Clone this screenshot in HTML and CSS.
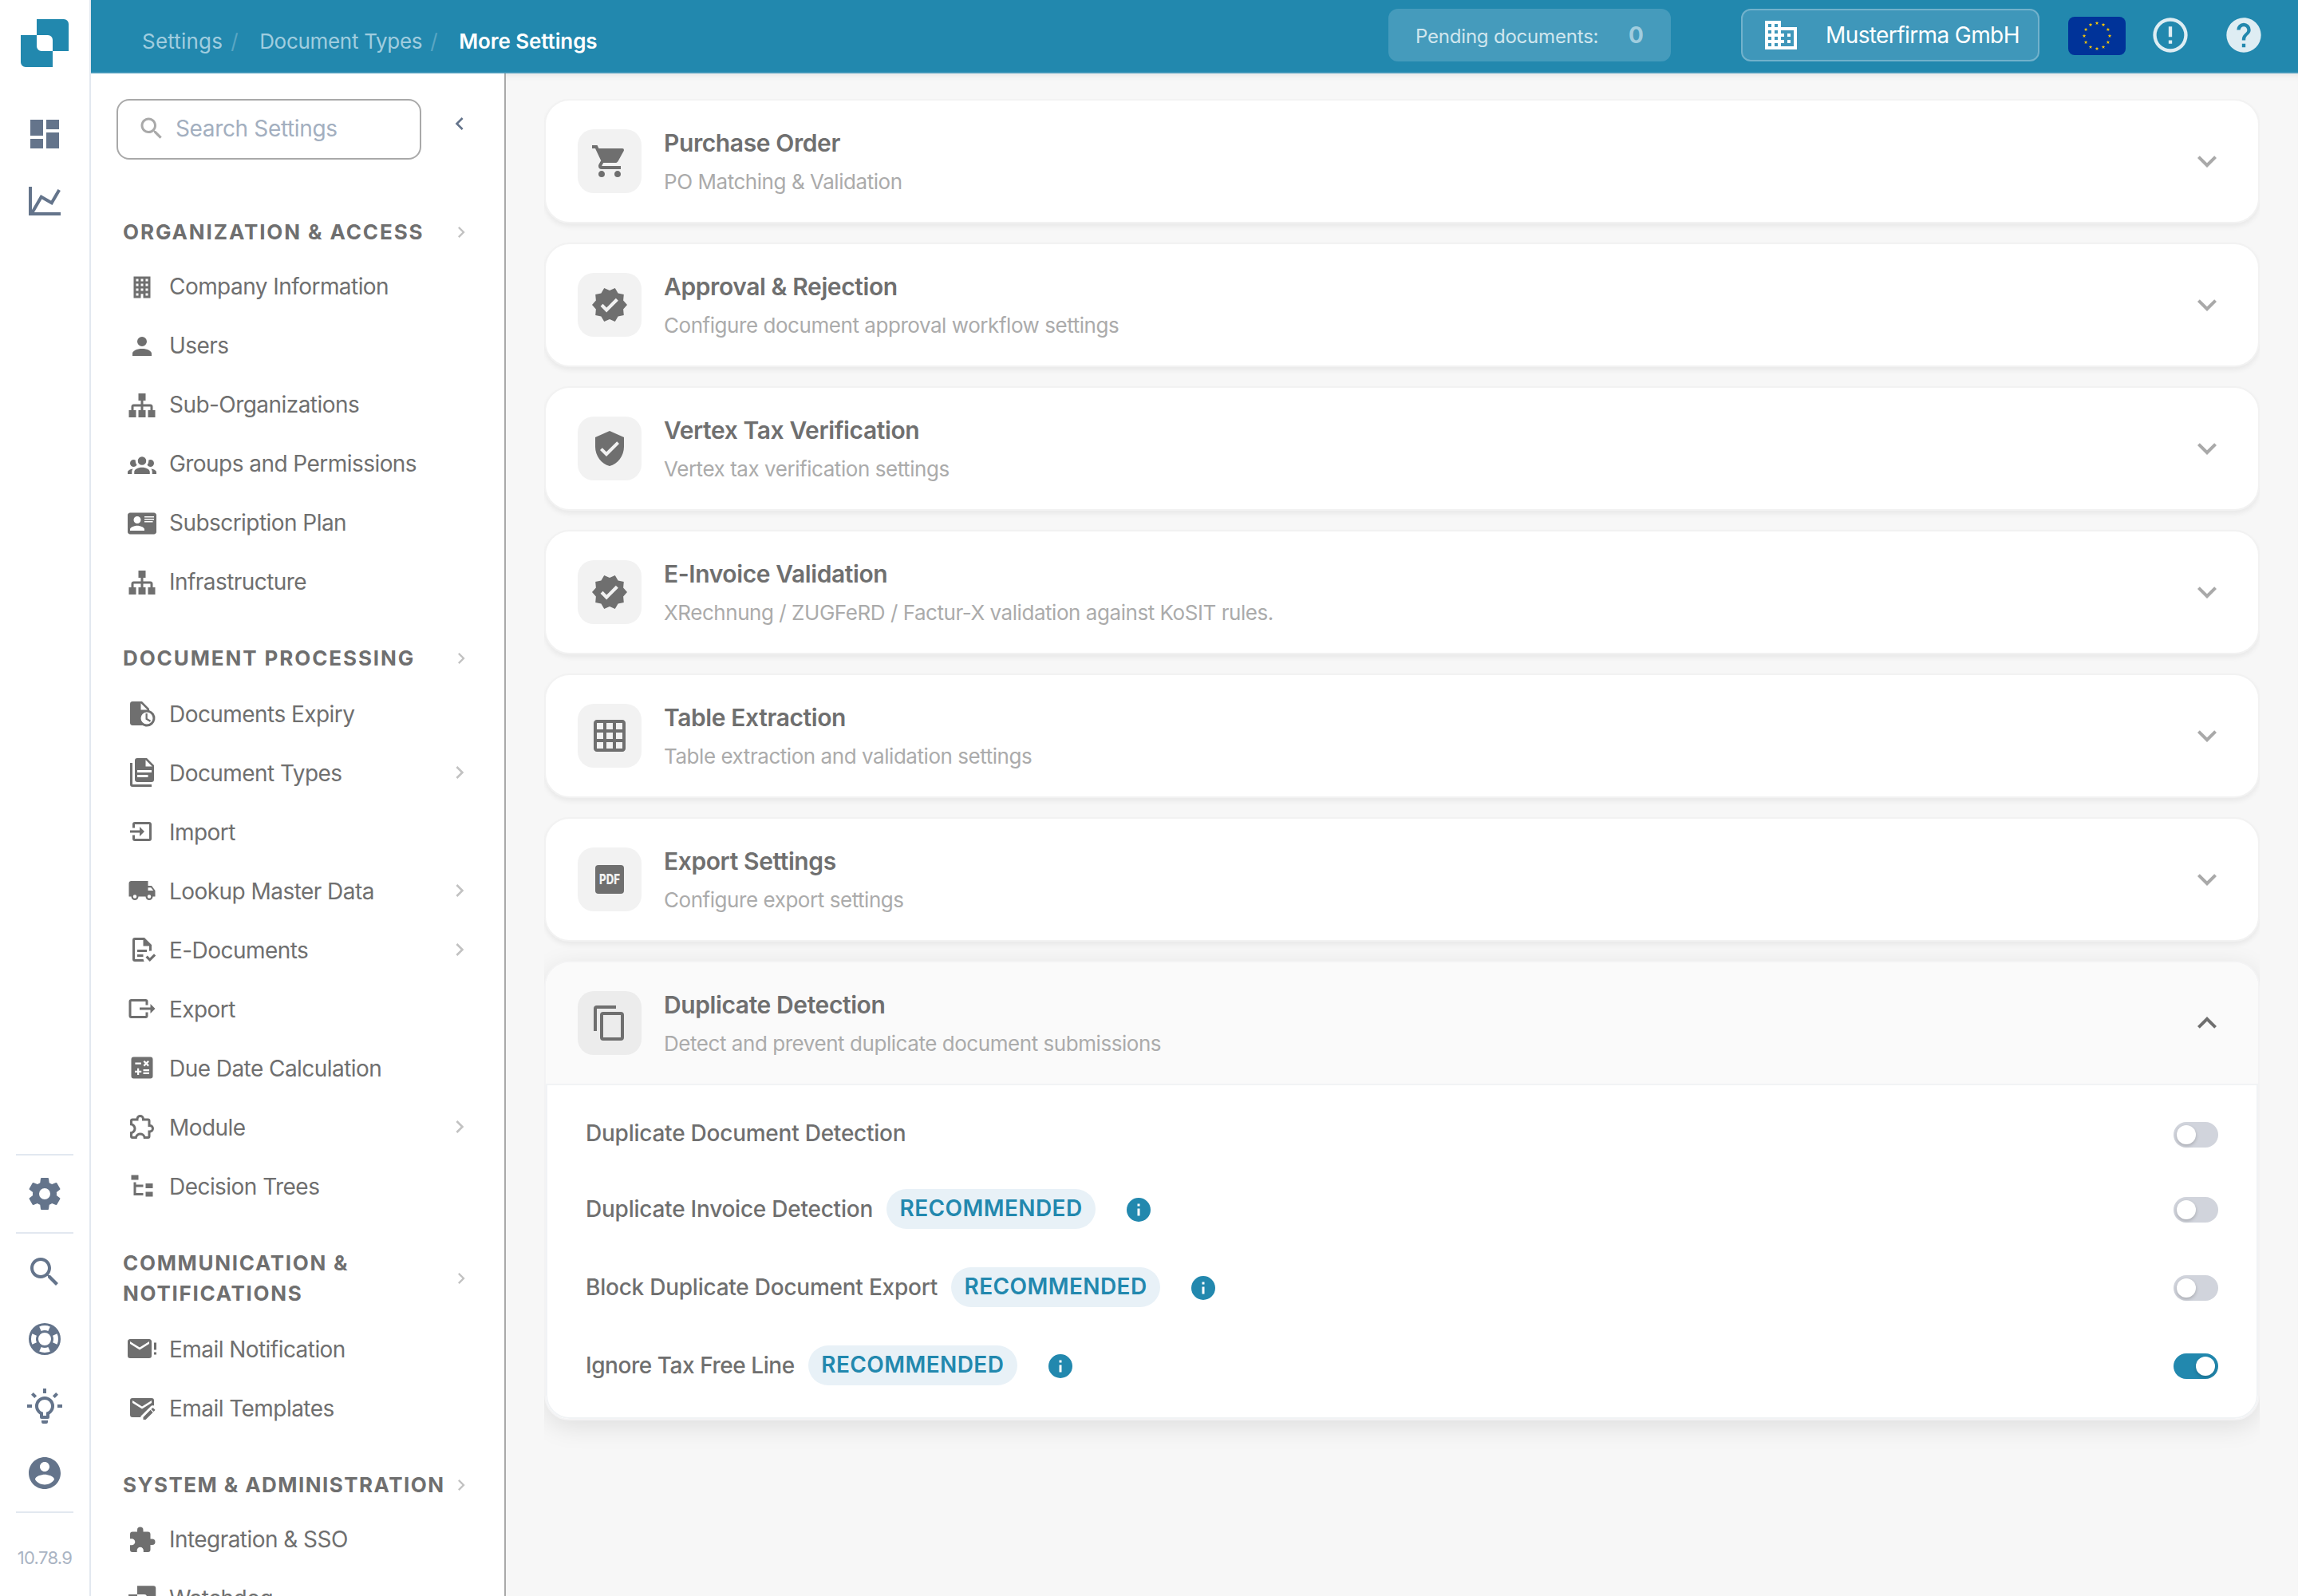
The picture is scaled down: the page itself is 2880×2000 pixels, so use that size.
FILE: index.html
```html
<!DOCTYPE html>
<html lang="en">
<head>
    <meta charset="UTF-8">
    <title>More Settings</title>
    <link rel="stylesheet" href="styles.css">
</head>
<body>
    <!-- Icon sprite -->
    <svg class="sprite" xmlns="http://www.w3.org/2000/svg">
        <symbol id="dashboard" viewBox="0 0 24 24"><path d="M3 13h8V3H3zm0 8h8v-6H3zm10 0h8V11h-8zm0-18v6h8V3z"/></symbol>
        <symbol id="chart" viewBox="0 0 24 24"><path d="M16,11.78L20.24,4.45L21.97,5.45L16.74,14.5L10.23,10.75L5.46,19H22V21H2V3H4V17.54L9.5,8L16,11.78Z"/></symbol>
        <symbol id="cog" viewBox="0 0 24 24"><path d="M12,15.5A3.5,3.5 0 0,1 8.5,12A3.5,3.5 0 0,1 12,8.5A3.5,3.5 0 0,1 15.5,12A3.5,3.5 0 0,1 12,15.5M19.43,12.97C19.47,12.65 19.5,12.33 19.5,12C19.5,11.67 19.47,11.34 19.43,11L21.54,9.37C21.73,9.22 21.78,8.95 21.66,8.73L19.66,5.27C19.54,5.05 19.27,4.96 19.05,5.05L16.56,6.05C16.04,5.66 15.5,5.32 14.87,5.07L14.5,2.42C14.46,2.18 14.25,2 14,2H10C9.75,2 9.54,2.18 9.5,2.42L9.13,5.07C8.5,5.32 7.96,5.66 7.44,6.05L4.95,5.05C4.73,4.96 4.46,5.05 4.34,5.27L2.34,8.73C2.21,8.95 2.27,9.22 2.46,9.37L4.57,11C4.53,11.34 4.5,11.67 4.5,12C4.5,12.33 4.53,12.65 4.57,12.97L2.46,14.63C2.27,14.78 2.21,15.05 2.34,15.27L4.34,18.73C4.46,18.95 4.73,19.03 4.95,18.95L7.44,17.94C7.96,18.34 8.5,18.68 9.13,18.93L9.5,21.58C9.54,21.82 9.75,22 10,22H14C14.25,22 14.46,21.82 14.5,21.58L14.87,18.93C15.5,18.67 16.04,18.34 16.56,17.94L19.05,18.95C19.27,19.03 19.54,18.95 19.66,18.73L21.66,15.27C21.78,15.05 21.73,14.78 21.54,14.63L19.43,12.97Z"/></symbol>
        <symbol id="search" viewBox="0 0 24 24"><path d="M15.5 14h-.79l-.28-.27C15.41 12.59 16 11.11 16 9.5 16 5.91 13.09 3 9.5 3S3 5.91 3 9.5 5.91 16 9.5 16c1.61 0 3.09-.59 4.23-1.57l.27.28v.79l5 4.99L20.49 19zm-6 0C7.01 14 5 11.99 5 9.5S7.01 5 9.5 5 14 7.01 14 9.5 11.99 14 9.5 14"/></symbol>
        <symbol id="lifebuoy" viewBox="0 0 24 24"><path d="M19.79,15.41C20.74,13.24 20.74,10.75 19.79,8.59L17.05,9.83C17.65,11.21 17.65,12.78 17.06,14.17L19.79,15.41M15.42,4.21C13.25,3.26 10.76,3.26 8.59,4.21L9.83,6.94C11.22,6.35 12.79,6.35 14.18,6.95L15.42,4.21M4.21,8.58C3.26,10.76 3.26,13.24 4.21,15.42L6.95,14.17C6.35,12.79 6.35,11.21 6.95,9.82L4.21,8.58M8.59,19.79C10.76,20.74 13.25,20.74 15.42,19.78L14.18,17.05C12.8,17.65 11.22,17.65 9.84,17.06L8.59,19.79M12,2A10,10 0 0,1 22,12A10,10 0 0,1 12,22A10,10 0 0,1 2,12A10,10 0 0,1 12,2M12,8A4,4 0 0,0 8,12A4,4 0 0,0 12,16A4,4 0 0,0 16,12A4,4 0 0,0 12,8Z"/></symbol>
        <symbol id="bulb" viewBox="0 0 24 24"><path d="M20,11H23V13H20V11M1,11H4V13H1V11M13,1V4H11V1H13M4.92,3.5L7.05,5.64L5.63,7.05L3.5,4.93L4.92,3.5M16.95,5.63L19.07,3.5L20.5,4.93L18.37,7.05L16.95,5.63M12,6A6,6 0 0,1 18,12C18,14.22 16.79,16.16 15,17.2V19A1,1 0 0,1 14,20H10A1,1 0 0,1 9,19V17.2C7.21,16.16 6,14.22 6,12A6,6 0 0,1 12,6M14,21V22A1,1 0 0,1 13,23H11A1,1 0 0,1 10,22V21H14M11,18H13V15.87C14.73,15.43 16,13.86 16,12A4,4 0 0,0 12,8A4,4 0 0,0 8,12C8,13.86 9.27,15.43 11,15.87V18Z"/></symbol>
        <symbol id="account-circle" viewBox="0 0 24 24"><path d="M12 2C6.48 2 2 6.48 2 12s4.48 10 10 10 10-4.48 10-10S17.52 2 12 2zm0 3c1.66 0 3 1.34 3 3s-1.34 3-3 3-3-1.34-3-3 1.34-3 3-3zm0 14.2c-2.5 0-4.71-1.28-6-3.22.03-1.99 4-3.08 6-3.08 1.99 0 5.97 1.09 6 3.08-1.29 1.94-3.5 3.22-6 3.22z"/></symbol>
        <symbol id="domain" viewBox="0 0 24 24"><path d="M18,15H16V17H18M18,11H16V13H18M20,19H12V17H14V15H12V13H14V11H12V9H20M10,7H8V5H10M10,11H8V9H10M10,15H8V13H10M10,19H8V17H10M6,7H4V5H6M6,11H4V9H6M6,15H4V13H6M6,19H4V17H6M12,7V3H2V21H22V7H12Z"/></symbol>
        <symbol id="alert" viewBox="0 0 24 24"><path d="M11,15H13V17H11V15M11,7H13V13H11V7M12,2A10,10 0 0,0 2,12A10,10 0 0,0 12,22A10,10 0 0,0 22,12A10,10 0 0,0 12,2M12,20A8,8 0 0,1 4,12A8,8 0 0,1 12,4A8,8 0 0,1 20,12A8,8 0 0,1 12,20Z"/></symbol>
        <symbol id="help" viewBox="0 0 24 24"><path d="M15.07,11.25L14.17,12.17C13.45,12.89 13,13.5 13,15H11V14.5C11,13.39 11.45,12.39 12.17,11.67L13.41,10.41C13.78,10.05 14,9.55 14,9C14,7.89 13.1,7 12,7A2,2 0 0,0 10,9H8A4,4 0 0,1 12,5A4,4 0 0,1 16,9C16,9.88 15.64,10.67 15.07,11.25M13,19H11V17H13M12,2A10,10 0 0,0 2,12A10,10 0 0,0 12,22A10,10 0 0,0 22,12C22,6.47 17.5,2 12,2Z"/></symbol>
        <symbol id="office" viewBox="0 0 24 24"><path d="M5,3V21H11V17.5H13V21H19V3H5M7,5H9V7H7V5M11,5H13V7H11V5M15,5H17V7H15V5M7,9H9V11H7V9M11,9H13V11H11V9M15,9H17V11H15V9M7,13H9V15H7V13M11,13H13V15H11V13M15,13H17V15H15V13M7,17H9V19H7V17M15,17H17V19H15V17Z"/></symbol>
        <symbol id="account" viewBox="0 0 24 24"><path d="M12,4A4,4 0 0,1 16,8A4,4 0 0,1 12,12A4,4 0 0,1 8,8A4,4 0 0,1 12,4M12,14C16.42,14 20,15.79 20,18V20H4V18C4,15.79 7.58,14 12,14Z"/></symbol>
        <symbol id="sitemap" viewBox="0 0 24 24"><path d="M9,2V8H11V11H5C3.89,11 3,11.89 3,13V16H1V22H7V16H5V13H11V16H9V22H15V16H13V13H19V16H17V22H23V16H21V13C21,11.89 20.11,11 19,11H13V8H15V2H9Z"/></symbol>
        <symbol id="group" viewBox="0 0 24 24"><path d="M12,5.5A3.5,3.5 0 0,1 15.5,9A3.5,3.5 0 0,1 12,12.5A3.5,3.5 0 0,1 8.5,9A3.5,3.5 0 0,1 12,5.5M5,8C5.56,8 6.08,8.15 6.53,8.42C6.38,9.85 6.8,11.27 7.66,12.38C7.16,13.34 6.16,14 5,14A3,3 0 0,1 2,11A3,3 0 0,1 5,8M19,8A3,3 0 0,1 22,11A3,3 0 0,1 19,14C17.84,14 16.84,13.34 16.34,12.38C17.2,11.27 17.62,9.85 17.47,8.42C17.92,8.15 18.44,8 19,8M5.5,18.25C5.5,16.18 8.41,14.5 12,14.5C15.59,14.5 18.5,16.18 18.5,18.25V20H5.5V18.25M0,20V18.5C0,17.11 1.89,15.94 4.45,15.6C3.86,16.28 3.5,17.22 3.5,18.25V20H0M24,20H20.5V18.25C20.5,17.22 20.14,16.28 19.55,15.6C22.11,15.94 24,17.11 24,18.5V20Z"/></symbol>
        <symbol id="card-account" viewBox="0 0 24 24"><path d="M2,3H22C23.05,3 24,3.95 24,5V19C24,20.05 23.05,21 22,21H2C0.95,21 0,20.05 0,19V5C0,3.95 0.95,3 2,3M14,6V7H22V6H14M14,8V9H21.5L22,9V8H14M14,10V11H21V10H14M8,13.91C6,13.91 2,15 2,17V18H14V17C14,15 10,13.91 8,13.91M8,6A3,3 0 0,0 5,9A3,3 0 0,0 8,12A3,3 0 0,0 11,9A3,3 0 0,0 8,6Z"/></symbol>
        <symbol id="file-clock" viewBox="0 0 24 24"><path d="M4 2C2.89 2 2 2.89 2 4V20C2 21.11 2.89 22 4 22H12.4C13.5 22.6 14.7 23 16 23A7 7 0 0 0 18 9.3V8L12 2H4M11 3.5L16.5 9H11V3.5M16 11A5 5 0 0 1 16 21A5 5 0 0 1 16 11M15 12V17L18.6 19.2L19.4 17.9L16.5 16.2V12H15Z"/></symbol>
        <symbol id="documents" viewBox="0 0 24 24"><path d="M15,7H20.5L15,1.5V7M8,0H16L22,6V18A2,2 0 0,1 20,20H8C6.89,20 6,19.1 6,18V2A2,2 0 0,1 8,0M4,4V22H20V24H4A2,2 0 0,1 2,22V4H4M8,10V12H20V10H8M8,14V16H17V14H8Z"/></symbol>
        <symbol id="import" viewBox="0 0 24 24"><path d="M14,12L10,8V11H2V13H10V16M20,18V6C20,4.89 19.1,4 18,4H6A2,2 0 0,0 4,6V9H6V6H18V18H6V15H4V18A2,2 0 0,0 6,20H18A2,2 0 0,0 20,18Z"/></symbol>
        <symbol id="truck" viewBox="0 0 24 24"><path d="M18,18.5A1.5,1.5 0 0,1 16.5,17A1.5,1.5 0 0,1 18,15.5A1.5,1.5 0 0,1 19.5,17A1.5,1.5 0 0,1 18,18.5M19.5,9.5L21.46,12H17V9.5M6,18.5A1.5,1.5 0 0,1 4.5,17A1.5,1.5 0 0,1 6,15.5A1.5,1.5 0 0,1 7.5,17A1.5,1.5 0 0,1 6,18.5M20,8H17V4H3C1.89,4 1,4.89 1,6V17H3A3,3 0 0,0 6,20A3,3 0 0,0 9,17H15A3,3 0 0,0 18,20A3,3 0 0,0 21,17H23V12L20,8Z"/></symbol>
        <symbol id="file-check" viewBox="0 0 24 24"><path d="M23.5 17L18.5 22L15 18.5L16.5 17L18.5 19L22 15.5L23.5 17M6 2A2 2 0 0 0 4 4V20A2 2 0 0 0 6 22H13.8A6 6 0 0 1 13.1 20H6V4H13V9H18V13.1A6 6 0 0 1 20 13V8L14 2M8 12V14H16V12M8 16V18H13V16Z"/></symbol>
        <symbol id="export" viewBox="0 0 24 24"><path d="M23,12L19,8V11H10V13H19V16M1,18V6C1,4.89 1.9,4 3,4H15A2,2 0 0,1 17,6V9H15V6H3V18H15V15H17V18A2,2 0 0,1 15,20H3A2,2 0 0,1 1,18Z"/></symbol>
        <symbol id="calculator" viewBox="0 0 24 24"><path d="M19,3H5A2,2 0 0,0 3,5V19A2,2 0 0,0 5,21H19A2,2 0 0,0 21,19V5A2,2 0 0,0 19,3M13.03,7.06L14.09,6L15.5,7.41L16.91,6L17.97,7.06L16.56,8.47L17.97,9.88L16.91,10.94L15.5,9.53L14.09,10.94L13.03,9.88L14.44,8.47L13.03,7.06M6.25,7.72H11.25V9.22H6.25V7.72M11.5,16H9.5V18H8V16H6V14.5H8V12.5H9.5V14.5H11.5V16M18,17.25H13V15.75H18V17.25M18,14.75H13V13.25H18V14.75Z"/></symbol>
        <symbol id="puzzle-outline" viewBox="0 0 24 24"><path d="M22,13.5C22,15.26 20.7,16.72 19,16.96V20A2,2 0 0,1 17,22H13.2V21.7A2.7,2.7 0 0,0 10.5,19C9,19 7.8,20.21 7.8,21.7V22H4A2,2 0 0,1 2,20V16.2H2.3C3.79,16.2 5,15 5,13.5C5,12 3.79,10.8 2.3,10.8H2V7A2,2 0 0,1 4,5H7.04C7.28,3.3 8.74,2 10.5,2C12.26,2 13.72,3.3 13.96,5H17A2,2 0 0,1 19,7V10.04C20.7,10.28 22,11.74 22,13.5M17,15H18.5A1.5,1.5 0 0,0 20,13.5A1.5,1.5 0 0,0 18.5,12H17V7H12V5.5A1.5,1.5 0 0,0 10.5,4A1.5,1.5 0 0,0 9,5.5V7H4V9.12C5.76,9.8 7,11.5 7,13.5C7,15.5 5.75,17.2 4,17.88V20H6.12C6.8,18.25 8.5,17 10.5,17C12.5,17 14.2,18.25 14.88,20H17V15Z"/></symbol>
        <symbol id="file-tree" viewBox="0 0 24 24"><path d="M3,3H9V7H3V3M15,10H21V14H15V10M15,17H21V21H15V17M13,13H7V18H13V20H7L5,20V9H7V11H13V13Z"/></symbol>
        <symbol id="email-alert" viewBox="0 0 24 24"><path d="M24 7H22V13H24V7M24,15H22V17H24V15M20,6C20,4.9 19.1,4 18,4H2C0.9,4 0,4.9 0,6V18A2,2 0 0,0 2,20H18A2,2 0 0,0 20,18V6M18,8L10,13L2,8V6L10,11L18,6V8Z"/></symbol>
        <symbol id="email-edit" viewBox="0 0 24 24"><path d="M4 4H20A2 2 0 0 1 22 6V10.3C20.9 10 19.8 10.3 19 11.1L10.9 19.1V20H4A2 2 0 0 1 2 18V6A2 2 0 0 1 4 4M20 8V6L12 11L4 6V8L12 13L20 8M19.07 13.88L13 19.94V22H15.06L21.12 15.93L19.07 13.88M22.7 13.58L21.42 12.3A.55 .55 0 0 0 20.63 12.3L19.63 13.3L21.68 15.35L22.7 14.35A.55 .55 0 0 0 22.7 13.58Z"/></symbol>
        <symbol id="puzzle" viewBox="0 0 24 24"><path d="M20.5,11H19V7C19,5.89 18.1,5 17,5H13V3.5A2.5,2.5 0 0,0 10.5,1A2.5,2.5 0 0,0 8,3.5V5H4A2,2 0 0,0 2,7V10.8H3.5C5,10.8 6.2,12 6.2,13.5C6.2,15 5,16.2 3.5,16.2H2V20A2,2 0 0,0 4,22H7.8V20.5C7.8,19 9,17.8 10.5,17.8C12,17.8 13.2,19 13.2,20.5V22H17A2,2 0 0,0 19,20V16H20.5A2.5,2.5 0 0,0 23,13.5A2.5,2.5 0 0,0 20.5,11Z"/></symbol>
        <symbol id="watchdog" viewBox="0 0 24 24"><path d="M8 .8H21.5A2 2 0 0 1 23.5 2.8V16H16V10A2 2 0 0 0 14 8H8ZM.7 8H8V14A2 2 0 0 0 10 16H16V23.2H2.7A2 2 0 0 1 .7 21.2Z"/></symbol>
        <symbol id="cart" viewBox="0 0 24 24"><path d="M17,18C15.89,18 15,18.89 15,20A2,2 0 0,0 17,22A2,2 0 0,0 19,20C19,18.89 18.1,18 17,18M1,2V4H3L6.6,11.59L5.24,14.04C5.09,14.32 5,14.65 5,15A2,2 0 0,0 7,17H19V15H7.42A0.25,0.25 0 0,1 7.17,14.75C7.17,14.7 7.18,14.66 7.2,14.63L8.1,13H15.55C16.3,13 16.96,12.58 17.3,11.97L20.88,5.5C20.95,5.34 21,5.17 21,5A1,1 0 0,0 20,4H5.21L4.27,2M7,18C5.89,18 5,18.89 5,20A2,2 0 0,0 7,22A2,2 0 0,0 9,20C9,18.89 8.1,18 7,18Z"/></symbol>
        <symbol id="verified" viewBox="0 0 24 24"><path d="m23 12-2.44-2.79.34-3.69-3.61-.82-1.89-3.2L12 2.96 8.6 1.5 6.71 4.69 3.1 5.5l.34 3.7L1 12l2.44 2.79-.34 3.7 3.61.82L8.6 22.5l3.4-1.47 3.4 1.46 1.89-3.19 3.61-.82-.34-3.69zm-12.91 4.72-3.8-3.81 1.48-1.48 2.32 2.33 5.85-5.87 1.48 1.48z"/></symbol>
        <symbol id="shield" viewBox="0 0 24 24"><path d="M10,17L6,13L7.41,11.58L10,14.17L16.59,7.58L18,9M12,1L3,5V11C3,16.55 6.84,21.74 12,23C17.16,21.74 21,16.55 21,11V5L12,1Z"/></symbol>
        <symbol id="grid" viewBox="0 0 24 24"><path d="M20 2H4c-1.1 0-2 .9-2 2v16c0 1.1.9 2 2 2h16c1.1 0 2-.9 2-2V4c0-1.1-.9-2-2-2M8 20H4v-4h4zm0-6H4v-4h4zm0-6H4V4h4zm6 12h-4v-4h4zm0-6h-4v-4h4zm0-6h-4V4h4zm6 12h-4v-4h4zm0-6h-4v-4h4zm0-6h-4V4h4z"/></symbol>
        <symbol id="copy" viewBox="0 0 24 24"><path d="M19,21H8V7H19M19,5H8A2,2 0 0,0 6,7V21A2,2 0 0,0 8,23H19A2,2 0 0,0 21,21V7A2,2 0 0,0 19,5M16,1H4A2,2 0 0,0 2,3V17H4V3H16V1Z"/></symbol>
        <symbol id="info" viewBox="0 0 24 24"><path d="M13,9H11V7H13M13,17H11V11H13M12,2A10,10 0 0,0 2,12A10,10 0 0,0 12,22A10,10 0 0,0 22,12A10,10 0 0,0 12,2Z"/></symbol>
        <symbol id="right" viewBox="0 0 24 24"><path d="M10 6 8.59 7.41 13.17 12l-4.58 4.59L10 18l6-6z"/></symbol>
        <symbol id="left" viewBox="0 0 24 24"><path d="M15.41 7.41 14 6l-6 6 6 6 1.41-1.41L10.83 12z"/></symbol>
        <symbol id="down" viewBox="0 0 24 24"><path d="M16.59 8.59 12 13.17 7.41 8.59 6 10l6 6 6-6z"/></symbol>
        <symbol id="up" viewBox="0 0 24 24"><path d="m12 8-6 6 1.41 1.41L12 10.83l4.59 4.58L18 14z"/></symbol>
        <symbol id="star" viewBox="-10 -10 20 20"><path d="M0-10 2.3-3.1H9.5L3.7 1.2 5.9 8.1 0 3.8-5.9 8.1-3.7 1.2-9.5-3.1H-2.3Z"/></symbol>
    </svg>

    <div class="app">
        <!-- Icon rail -->
        <nav class="rail">
            <svg class="logo" viewBox="0 0 60 60">
                <path d="M20 0H54A6 6 0 0 1 60 6V40H40V26A6 6 0 0 0 34 20H20Z"/>
                <path d="M0 20H20V34A6 6 0 0 0 26 40H40V60H6A6 6 0 0 1 0 54Z"/>
            </svg>
            <div class="rail-top">
                <svg class="icon"><use href="#dashboard"/></svg>
                <svg class="icon"><use href="#chart"/></svg>
            </div>
            <div class="rail-bottom">
                <div class="rail-settings"><svg class="icon"><use href="#cog"/></svg></div>
                <div class="rail-links">
                    <svg class="icon"><use href="#search"/></svg>
                    <svg class="icon"><use href="#lifebuoy"/></svg>
                    <svg class="icon"><use href="#bulb"/></svg>
                    <svg class="icon"><use href="#account-circle"/></svg>
                </div>
                <div class="version">10.78.9</div>
            </div>
        </nav>

        <div class="page">
            <header class="header">
                <div class="breadcrumbs">
                    <a class="crumb crumb-settings">Settings</a>
                    <span class="slash">/</span>
                    <a class="crumb crumb-types">Document Types</a>
                    <span class="slash">/</span>
                    <span class="crumb current">More Settings</span>
                </div>
                <div class="pending"><span class="pending-label">Pending documents:</span><span class="pending-count">0</span></div>
                <div class="company"><svg class="icon"><use href="#domain"/></svg><span>Musterfirma GmbH</span></div>
                <svg class="flag" viewBox="-36 -24 72 48">
                    <rect x="-36" y="-24" width="72" height="48" rx="8" fill="#003399"/>
                    <g fill="#ffcc00">
                        <use href="#star" x="-2.5" y="-18.5" width="5" height="5"/>
                        <use href="#star" x="5.5" y="-16.4" width="5" height="5"/>
                        <use href="#star" x="11.4" y="-10.5" width="5" height="5"/>
                        <use href="#star" x="13.5" y="-2.5" width="5" height="5"/>
                        <use href="#star" x="11.4" y="5.5" width="5" height="5"/>
                        <use href="#star" x="5.5" y="11.4" width="5" height="5"/>
                        <use href="#star" x="-2.5" y="13.5" width="5" height="5"/>
                        <use href="#star" x="-10.5" y="11.4" width="5" height="5"/>
                        <use href="#star" x="-16.4" y="5.5" width="5" height="5"/>
                        <use href="#star" x="-18.5" y="-2.5" width="5" height="5"/>
                        <use href="#star" x="-16.4" y="-10.5" width="5" height="5"/>
                        <use href="#star" x="-10.5" y="-16.4" width="5" height="5"/>
                    </g>
                </svg>
                <svg class="icon header-icon"><use href="#alert"/></svg>
                <svg class="icon header-icon"><use href="#help"/></svg>
            </header>

            <div class="content">
                <aside class="sidebar">
                    <div class="search-row">
                        <div class="search"><svg class="icon"><use href="#search"/></svg><span>Search Settings</span></div>
                        <svg class="icon collapse"><use href="#left"/></svg>
                    </div>

                    <div class="group group-access">
                        <h3 class="group-title"><span>ORGANIZATION &amp; ACCESS</span><svg class="icon"><use href="#right"/></svg></h3>
                        <a class="item"><svg class="icon"><use href="#office"/></svg><span>Company Information</span></a>
                        <a class="item"><svg class="icon"><use href="#account"/></svg><span>Users</span></a>
                        <a class="item"><svg class="icon"><use href="#sitemap"/></svg><span>Sub-Organizations</span></a>
                        <a class="item"><svg class="icon"><use href="#group"/></svg><span>Groups and Permissions</span></a>
                        <a class="item"><svg class="icon"><use href="#card-account"/></svg><span>Subscription Plan</span></a>
                        <a class="item"><svg class="icon"><use href="#sitemap"/></svg><span>Infrastructure</span></a>
                    </div>

                    <div class="group">
                        <h3 class="group-title"><span>DOCUMENT PROCESSING</span><svg class="icon"><use href="#right"/></svg></h3>
                        <a class="item"><svg class="icon"><use href="#file-clock"/></svg><span>Documents Expiry</span></a>
                        <a class="item"><svg class="icon"><use href="#documents"/></svg><span>Document Types</span><svg class="icon more"><use href="#right"/></svg></a>
                        <a class="item"><svg class="icon"><use href="#import"/></svg><span>Import</span></a>
                        <a class="item"><svg class="icon"><use href="#truck"/></svg><span>Lookup Master Data</span><svg class="icon more"><use href="#right"/></svg></a>
                        <a class="item"><svg class="icon"><use href="#file-check"/></svg><span>E-Documents</span><svg class="icon more"><use href="#right"/></svg></a>
                        <a class="item"><svg class="icon"><use href="#export"/></svg><span>Export</span></a>
                        <a class="item"><svg class="icon"><use href="#calculator"/></svg><span>Due Date Calculation</span></a>
                        <a class="item"><svg class="icon"><use href="#puzzle-outline"/></svg><span>Module</span><svg class="icon more"><use href="#right"/></svg></a>
                        <a class="item"><svg class="icon"><use href="#file-tree"/></svg><span>Decision Trees</span></a>
                    </div>

                    <div class="group group-mail">
                        <h3 class="group-title"><span>COMMUNICATION &amp;<br>NOTIFICATIONS</span><svg class="icon"><use href="#right"/></svg></h3>
                        <a class="item"><svg class="icon"><use href="#email-alert"/></svg><span>Email Notification</span></a>
                        <a class="item"><svg class="icon"><use href="#email-edit"/></svg><span>Email Templates</span></a>
                    </div>

                    <div class="group group-system">
                        <h3 class="group-title"><span>SYSTEM &amp; ADMINISTRATION</span><svg class="icon"><use href="#right"/></svg></h3>
                        <a class="item"><svg class="icon"><use href="#puzzle"/></svg><span>Integration &amp; SSO</span></a>
                        <a class="item"><svg class="icon"><use href="#watchdog"/></svg><span>Watchdog</span></a>
                    </div>
                </aside>

                <main class="main">
                    <div class="cards">
                        <section class="card">
                            <div class="card-header">
                                <div class="tile"><svg class="icon"><use href="#cart"/></svg></div>
                                <div class="card-text"><h2>Purchase Order</h2><p>PO Matching &amp; Validation</p></div>
                                <svg class="icon arrow"><use href="#down"/></svg>
                            </div>
                        </section>
                        <section class="card">
                            <div class="card-header">
                                <div class="tile"><svg class="icon"><use href="#verified"/></svg></div>
                                <div class="card-text"><h2>Approval &amp; Rejection</h2><p>Configure document approval workflow settings</p></div>
                                <svg class="icon arrow"><use href="#down"/></svg>
                            </div>
                        </section>
                        <section class="card">
                            <div class="card-header">
                                <div class="tile"><svg class="icon"><use href="#shield"/></svg></div>
                                <div class="card-text"><h2>Vertex Tax Verification</h2><p>Vertex tax verification settings</p></div>
                                <svg class="icon arrow"><use href="#down"/></svg>
                            </div>
                        </section>
                        <section class="card">
                            <div class="card-header">
                                <div class="tile"><svg class="icon"><use href="#verified"/></svg></div>
                                <div class="card-text"><h2>E-Invoice Validation</h2><p>XRechnung / ZUGFeRD / Factur-X validation against KoSIT rules.</p></div>
                                <svg class="icon arrow"><use href="#down"/></svg>
                            </div>
                        </section>
                        <section class="card">
                            <div class="card-header">
                                <div class="tile"><svg class="icon"><use href="#grid"/></svg></div>
                                <div class="card-text"><h2>Table Extraction</h2><p>Table extraction and validation settings</p></div>
                                <svg class="icon arrow"><use href="#down"/></svg>
                            </div>
                        </section>
                        <section class="card">
                            <div class="card-header">
                                <div class="tile">
                                    <svg class="pdf" viewBox="0 0 36 36">
                                        <rect width="36" height="36" rx="4"/>
                                        <text x="5" y="24" textLength="26" lengthAdjust="spacingAndGlyphs">PDF</text>
                                    </svg>
                                </div>
                                <div class="card-text"><h2>Export Settings</h2><p>Configure export settings</p></div>
                                <svg class="icon arrow"><use href="#down"/></svg>
                            </div>
                        </section>

                        <section class="card card-open">
                            <div class="card-header">
                                <div class="tile"><svg class="icon"><use href="#copy"/></svg></div>
                                <div class="card-text"><h2>Duplicate Detection</h2><p>Detect and prevent duplicate document submissions</p></div>
                                <svg class="icon arrow"><use href="#up"/></svg>
                            </div>
                            <div class="card-body">
                                <div class="setting">
                                    <span class="setting-name">Duplicate Document Detection</span>
                                    <span class="toggle"></span>
                                </div>
                                <div class="setting">
                                    <span class="setting-name">Duplicate Invoice Detection</span>
                                    <span class="badge">RECOMMENDED</span>
                                    <svg class="icon info"><use href="#info"/></svg>
                                    <span class="toggle"></span>
                                </div>
                                <div class="setting">
                                    <span class="setting-name">Block Duplicate Document Export</span>
                                    <span class="badge">RECOMMENDED</span>
                                    <svg class="icon info"><use href="#info"/></svg>
                                    <span class="toggle"></span>
                                </div>
                                <div class="setting">
                                    <span class="setting-name tight">Ignore Tax Free Line</span>
                                    <span class="badge">RECOMMENDED</span>
                                    <svg class="icon info"><use href="#info"/></svg>
                                    <span class="toggle on"></span>
                                </div>
                            </div>
                        </section>
                    </div>
                </main>
            </div>
        </div>
    </div>
</body>
</html>
```
FILE: styles.css
```css
* {
    box-sizing: border-box;
}
body {
    margin: 0;
    height: 2000px;
    overflow: hidden;
    background-color: #f7f7f7;
    color: #6f6f6f;
    font-family: Inter, "Liberation Sans", sans-serif;
    font-size: 28px;
}
h2, h3, p {
    margin: 0;
}
.sprite {
    display: none;
}
.icon {
    display: block;
    flex: none;
    width: 48px;
    height: 48px;
    fill: currentColor;
    fill-rule: evenodd;
}
.app {
    display: flex;
    height: 2000px;
}

/* Icon rail */
.rail {
    display: flex;
    flex-direction: column;
    align-items: center;
    flex: none;
    width: 114px;
    padding-top: 24px;
    background-color: #ffffff;
    border-right: 2px solid #e2e8f0;
    color: #64748b;
}
.logo {
    width: 60px;
    height: 60px;
    fill: #2288ae;
}
.rail-top {
    display: flex;
    flex-direction: column;
    gap: 36px;
    margin-top: 66px;
    margin-top: 60px;
}
.rail-bottom {
    display: flex;
    flex-direction: column;
    align-items: center;
    width: 72px;
    height: 554px;
    margin-top: auto;
}
.rail-settings {
    display: flex;
    justify-content: center;
    width: 72px;
    height: 100px;
    padding-top: 24px;
    border-top: 2px solid #e2e8f0;
    border-bottom: 2px solid #e2e8f0;
}
.rail-links {
    display: flex;
    flex-direction: column;
    align-items: center;
    gap: 36px;
    width: 72px;
    height: 350px;
    padding-top: 24px;
    border-bottom: 2px solid #e2e8f0;
}
.version {
    margin-top: 42px;
    color: #aab4c3;
    font-size: 22px;
    line-height: 28px;
    letter-spacing: -0.7px;
}

/* Header */
.page {
    display: flex;
    flex-direction: column;
    flex: 1;
    min-width: 0;
}
.header {
    display: flex;
    align-items: center;
    flex: none;
    height: 92px;
    padding: 0 42px 2px 64px;
    background-color: #2288ae;
    border-bottom: 2px solid #4398ba;
    color: #ffffff;
}
.breadcrumbs {
    display: flex;
    flex: 1;
    padding-top: 15px;
    font-size: 26px;
    line-height: 32px;
}
.crumb {
    color: #a0cddf;
}
.crumb-settings {
    letter-spacing: 0.2px;
}
.crumb-types {
    letter-spacing: -0.3px;
}
.crumb.current {
    color: #ffffff;
    font-weight: 600;
    letter-spacing: -0.1px;
}
.slash {
    width: 46px;
    padding-left: 10px;
    color: #5aa6c3;
}
.pending {
    display: flex;
    align-items: center;
    width: 354px;
    height: 66px;
    margin-right: 88px;
    padding-left: 34px;
    background-color: #459bbc;
    border-radius: 12px;
}
.pending-label {
    width: 267px;
    padding-top: 2px;
    color: #d0e6ee;
    font-size: 24px;
    letter-spacing: -0.2px;
}
.pending-count {
    color: #a0cddf;
    font-weight: 700;
}
.company {
    display: flex;
    align-items: center;
    width: 374px;
    height: 66px;
    padding-left: 24px;
    background-color: #3f97ba;
    border: 2px solid #72b2cc;
    border-radius: 12px;
}
.company span {
    margin-left: 32px;
    letter-spacing: -0.6px;
    white-space: nowrap;
}
.flag {
    width: 72px;
    height: 48px;
    margin: 2px 30px 0 36px;
}
.header-icon {
    width: 52px;
    height: 52px;
    color: #deedf3;
}
.header-icon + .header-icon {
    margin-left: 40px;
}

/* Settings navigation */
.content {
    display: flex;
    flex: 1;
    min-height: 0;
}
.sidebar {
    flex: none;
    width: 520px;
    overflow: hidden;
    padding: 32px 40px 0 32px;
    background-color: #ffffff;
    border-right: 2px solid #a9a9a9;
}
.search-row {
    display: flex;
    height: 76px;
}
.search {
    display: flex;
    align-items: center;
    width: 382px;
    padding: 0 0 2px 24px;
    border: 2px solid #a9a9a9;
    border-radius: 16px;
    color: #a3afbf;
}
.search .icon {
    width: 36px;
    height: 36px;
    color: #a9a9a9;
}
.search span {
    margin-left: 12px;
    letter-spacing: -0.35px;
}
.collapse {
    width: 32px;
    height: 32px;
    margin: 15px 0 0 32px;
    color: #64748b;
}
.group-title {
    display: flex;
    align-items: center;
    justify-content: space-between;
    min-height: 40px;
    margin: 38px 0 12px 8px;
    font-size: 26px;
    font-weight: 700;
    line-height: 38px;
    letter-spacing: 1.9px;
}
.group-title span {
    white-space: nowrap;
}
.group-title .icon {
    width: 28px;
    height: 28px;
    color: #c2c2c2;
}
.group-access .group-title {
    margin-top: 71px;
}
.group-mail .group-title {
    margin: 41px 0 13px 8px;
    letter-spacing: 1.7px;
}
.group-system .group-title {
    margin-top: 40px;
    letter-spacing: 1.45px;
}
.item {
    display: flex;
    align-items: center;
    height: 74px;
    padding-left: 14px;
}
.item .icon {
    width: 36px;
    height: 36px;
}
.item span {
    flex: 1;
    margin-left: 16px;
    padding-top: 1px;
    letter-spacing: -0.55px;
    white-space: nowrap;
}
.group-access .item span,
.group-system .item span {
    padding: 0 0 3px;
}
.item .more {
    width: 32px;
    height: 32px;
    color: #c2c2c2;
}

/* Cards */
.main {
    flex: 1;
    min-width: 0;
    padding: 32px 48px 0;
    box-shadow: inset 0 8px 8px -6px rgba(0, 0, 0, 0.08);
}
.cards {
    display: flex;
    flex-direction: column;
    gap: 24px;
    overflow: hidden;
    padding-bottom: 60px;
}
.card {
    overflow: hidden;
    background-color: #ffffff;
    border: 2px solid #f2f2f2;
    border-radius: 32px;
    box-shadow: 0 4px 6px rgba(0, 0, 0, 0.06);
}
.card-open {
    border-color: #f3f3f4;
    box-shadow: 0 8px 32px rgba(0, 0, 0, 0.1);
}
.card-header {
    display: flex;
    align-items: center;
    height: 152px;
    padding: 0 40px;
}
.card-open .card-header {
    background-color: #fafafa;
}
.tile {
    display: flex;
    align-items: center;
    justify-content: center;
    width: 80px;
    height: 80px;
    background-color: #f2f2f2;
    border-radius: 20px;
}
.card-open .tile {
    background-color: #ececec;
}
.pdf {
    width: 36px;
    height: 36px;
    fill: #6f6f6f;
}
.pdf text {
    fill: #f2f2f2;
    font-size: 17px;
    font-weight: 800;
}
.card-text {
    flex: 1;
    margin-left: 28px;
    padding-top: 2px;
}
.card-text h2 {
    font-size: 30px;
    font-weight: 600;
    line-height: 40px;
    letter-spacing: -0.4px;
}
.card-text p {
    margin-top: 10px;
    color: #ababab;
    font-size: 26px;
    line-height: 38px;
    letter-spacing: -0.45px;
}
.arrow {
    color: #a9a9a9;
}
.card-open .arrow {
    color: #6f6f6f;
}
.card-body {
    padding: 16px 48px 15px;
    border: 2px solid #f1f3f5;
    border-radius: 0 0 30px 30px;
}
.setting {
    display: flex;
    align-items: center;
    height: 98px;
}
.setting:first-child {
    height: 91px;
}
.setting-name {
    padding-bottom: 3px;
    font-weight: 500;
    letter-spacing: -0.24px;
}
.setting-name.tight {
    letter-spacing: -0.45px;
}
.badge {
    width: 262px;
    height: 50px;
    margin: 0 0 2px 17px;
    background-color: #e8f1f7;
    border-radius: 25px;
    color: #2288ae;
    font-weight: 600;
    line-height: 49px;
    letter-spacing: 0.4px;
    text-align: center;
}
.info {
    width: 36px;
    height: 36px;
    margin-left: 36px;
    color: #2288ae;
}
.toggle {
    width: 56px;
    height: 32px;
    margin-left: auto;
    padding: 4px;
    background-color: #d1d4dc;
    border-radius: 16px;
}
.toggle::before {
    content: "";
    display: block;
    width: 24px;
    height: 24px;
    background-color: #ffffff;
    border-radius: 50%;
    box-shadow: 0 2px 4px rgba(0, 0, 0, 0.2);
}
.toggle.on {
    padding-left: 28px;
    background-color: #2288ae;
}
```
